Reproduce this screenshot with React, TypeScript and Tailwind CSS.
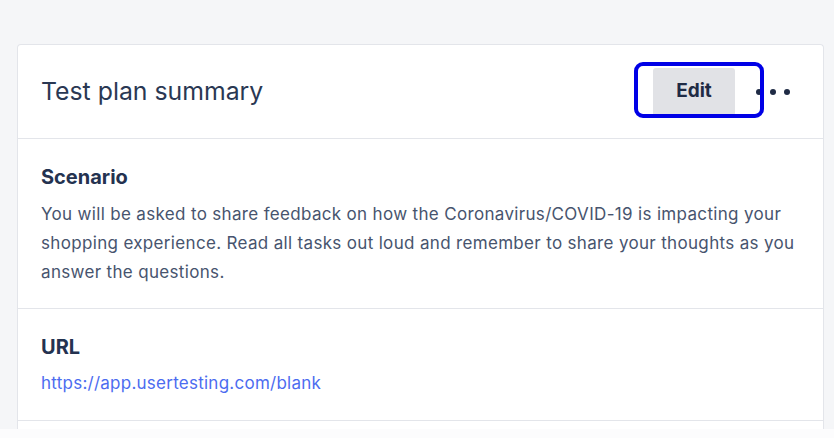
export default function App() {
  return (
    <div
      className="w-full h-[438px] flex flex-col bg-[#f5f6f8] overflow-hidden"
      style={{ fontFamily: "Inter, 'Open Sans', sans-serif" }}
    >
      <div className="flex-1 flex flex-col pt-[44px] pl-[17px] pr-[10px] min-h-0">
        <div className="flex-1 flex flex-col bg-white border border-[#e3e5ea] border-b-0 rounded-t-[4px]">
          {/* header */}
          <div className="h-[94px] flex items-center justify-between pl-[23px] pr-[33px] border-b border-[#e3e5ea]">
            <h1 className="text-[24.8px] leading-[30px] -mt-[2px] text-[#2a3853]">Test plan summary</h1>
            <div className="flex items-center">
              <div className="relative mt-[4px] mb-[4px]">
                <button className="w-[82px] h-[48px] rounded-[3px] bg-[#e1e2e6] text-[19px] font-bold text-[#1f2b45]">
                  Edit
                </button>
                <div className="absolute -left-[19px] -right-[29px] -top-[6px] -bottom-[2px] border-[4px] border-[#0000e6] rounded-[9px] pointer-events-none" />
              </div>
              <div className="flex items-center gap-[8px] ml-[21px]">
                <span className="w-[6px] h-[6px] rounded-full bg-[#1f2b45]" />
                <span className="w-[6px] h-[6px] rounded-full bg-[#1f2b45]" />
                <span className="w-[6px] h-[6px] rounded-full bg-[#1f2b45]" />
              </div>
            </div>
          </div>

          {/* scenario */}
          <div className="pl-[23px] pr-[10px] pt-[26px] pb-[21px] border-b border-[#e3e5ea]">
            <h2 className="text-[20px] leading-[24px] font-bold text-[#243250]">Scenario</h2>
            <p className="mt-[11px] text-[17px] tracking-[0.33px] leading-[29px] text-[#47546e] whitespace-nowrap">
              You will be asked to share feedback on how the Coronavirus/COVID-19 is impacting your
              <br />
              shopping experience. Read all tasks out loud and remember to share your thoughts as you
              <br />
              answer the questions.
            </p>
          </div>

          {/* url */}
          <div className="pl-[23px] pr-[20px] pt-[26px] pb-[22px] border-b border-[#e3e5ea]">
            <h2 className="text-[20px] leading-[24px] font-bold text-[#243250]">URL</h2>
            <a className="block mt-[10px] text-[17px] tracking-[0.25px] leading-[29px] text-[#4c6cf0]">
              https://app.usertesting.com/blank
            </a>
          </div>
          <div className="flex-1" />
        </div>
      </div>
      <div className="h-[9px] bg-[#fcfcfd]" />
    </div>
  );
}
